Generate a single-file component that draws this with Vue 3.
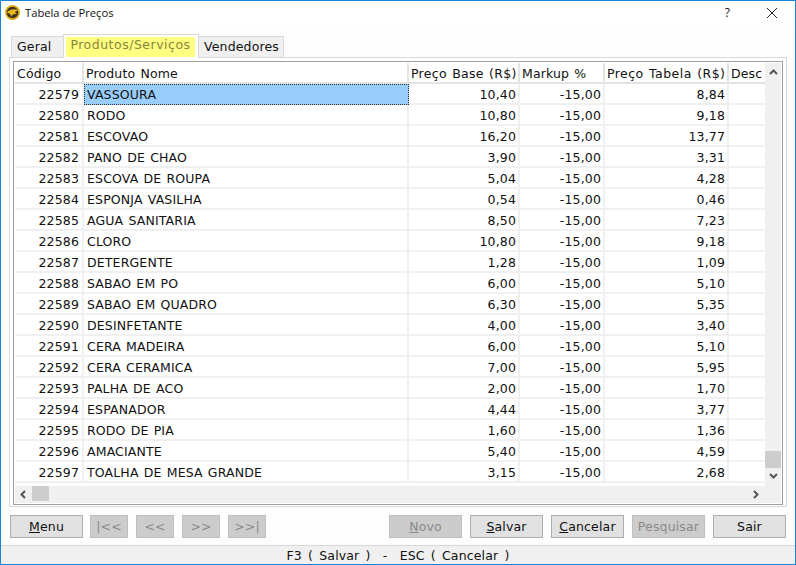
<script setup>
const rows = [
  [22579, 'VASSOURA', '10,40', '8,84'],
  [22580, 'RODO', '10,80', '9,18'],
  [22581, 'ESCOVAO', '16,20', '13,77'],
  [22582, 'PANO DE CHAO', '3,90', '3,31'],
  [22583, 'ESCOVA DE ROUPA', '5,04', '4,28'],
  [22584, 'ESPONJA VASILHA', '0,54', '0,46'],
  [22585, 'AGUA SANITARIA', '8,50', '7,23'],
  [22586, 'CLORO', '10,80', '9,18'],
  [22587, 'DETERGENTE', '1,28', '1,09'],
  [22588, 'SABAO EM PO', '6,00', '5,10'],
  [22589, 'SABAO EM QUADRO', '6,30', '5,35'],
  [22590, 'DESINFETANTE', '4,00', '3,40'],
  [22591, 'CERA MADEIRA', '6,00', '5,10'],
  [22592, 'CERA CERAMICA', '7,00', '5,95'],
  [22593, 'PALHA DE ACO', '2,00', '1,70'],
  [22594, 'ESPANADOR', '4,44', '3,77'],
  [22595, 'RODO DE PIA', '1,60', '1,36'],
  [22596, 'AMACIANTE', '5,40', '4,59'],
  [22597, 'TOALHA DE MESA GRANDE', '3,15', '2,68'],
]
</script>

<template>
  <div class="window">
    <div class="titlebar">
      <svg class="logo" width="15" height="15" viewBox="0 0 16 16">
        <circle cx="8" cy="8" r="8" fill="#e2ab18" />
        <circle cx="8" cy="8" r="6.2" fill="#3a3222" />
        <path d="M2 8.5 C4 5 9 3.5 14 5.5 L10.5 7.5 L13 10 C10 9 8 9.5 6.5 12.5 C6.5 10 5 8.5 2 8.5 Z" fill="#eab81e" />
      </svg>
      <span class="title">Tabela de Preços</span>
      <span class="help">?</span>
      <svg class="close" width="12" height="12" viewBox="0 0 12 12">
        <path d="M1 1 L11 11 M11 1 L1 11" stroke="#222" stroke-width="1" fill="none" />
      </svg>
    </div>

    <div class="tabs">
      <div class="tab">Geral</div>
      <div class="tab active"><span>Produtos/Serviços</span></div>
      <div class="tab">Vendedores</div>
    </div>

    <div class="panel">
      <div class="grid-box">
        <div class="grid-main">
          <div class="grid-cols">
            <div class="row head">
              <div class="cell">Código</div>
              <div class="cell">Produto Nome</div>
              <div class="cell base">Preço Base (R$)</div>
              <div class="cell">Markup %</div>
              <div class="cell price">Preço Tabela (R$)</div>
              <div class="cell">Desc</div>
            </div>
            <div v-for="(r, i) in rows" :key="r[0]" class="row">
              <div class="cell num">{{ r[0] }}</div>
              <div class="cell" :class="{ selected: i === 0 }">{{ r[1] }}</div>
              <div class="cell num">{{ r[2] }}</div>
              <div class="cell num">-15,00</div>
              <div class="cell num">{{ r[3] }}</div>
              <div class="cell"></div>
            </div>
          </div>
          <div class="vscroll">
            <svg width="9" height="6" viewBox="0 0 9 6"><path d="M1 5 L4.5 1.5 L8 5" stroke="#555" stroke-width="2" fill="none" /></svg>
            <div class="vtrack"><div class="vthumb"></div></div>
            <svg width="9" height="6" viewBox="0 0 9 6"><path d="M1 1 L4.5 4.5 L8 1" stroke="#555" stroke-width="2" fill="none" /></svg>
          </div>
        </div>
        <div class="hscroll">
          <svg width="6" height="9" viewBox="0 0 6 9"><path d="M5 1 L1.5 4.5 L5 8" stroke="#555" stroke-width="2" fill="none" /></svg>
          <div class="hthumb"></div>
          <svg class="hright" width="6" height="9" viewBox="0 0 6 9"><path d="M1 1 L4.5 4.5 L1 8" stroke="#555" stroke-width="2" fill="none" /></svg>
        </div>
      </div>
    </div>

    <div class="buttons">
      <button class="btn wide"><u>M</u>enu</button>
      <button class="btn nav off">|&lt;&lt;</button>
      <button class="btn nav off">&lt;&lt;</button>
      <button class="btn nav off">&gt;&gt;</button>
      <button class="btn nav off">&gt;&gt;|</button>
      <div class="spacer"></div>
      <button class="btn wide off"><u>N</u>ovo</button>
      <button class="btn wide"><u>S</u>alvar</button>
      <button class="btn wide"><u>C</u>ancelar</button>
      <button class="btn wide off">Pesquisar</button>
      <button class="btn wide">Sair</button>
    </div>

    <div class="status">F3 ( Salvar )&nbsp; -&nbsp; ESC ( Cancelar )</div>
  </div>
</template>

<style scoped>
.window {
  box-sizing: border-box;
  width: 796px;
  height: 565px;
  border: 1px solid #1a84d6;
  background: #fdfdfd;
  display: flex;
  flex-direction: column;
  font-family: "DejaVu Sans", sans-serif;
  font-size: 12.5px;
  letter-spacing: 0.15px;
  word-spacing: 1px;
  color: #111;
  overflow: hidden;
}
.titlebar {
  height: 29px;
  flex-shrink: 0;
  display: flex;
  align-items: center;
  padding: 0 0 6px 4px;
  box-sizing: border-box;
  background: #fff;
}
.logo {
  margin-right: 5px;
}
.title {
  font-family: "Open Sans", sans-serif;
  font-size: 11.2px;
  letter-spacing: 0;
  word-spacing: 0;
  flex: 1;
}
.help {
  font-family: "Open Sans", sans-serif;
  font-size: 12px;
  margin-right: 36px;
}
.close {
  margin-right: 17px;
}
.tabs {
  height: 27px;
  flex-shrink: 0;
  padding-left: 10px;
  display: flex;
  align-items: flex-end;
}
.tab {
  box-sizing: border-box;
  height: 21px;
  padding: 0 5px;
  border: 1px solid #d9d9d9;
  border-bottom: none;
  background: #f0f0f0;
  line-height: 20px;
  margin-right: -1px;
}
.tab:first-child {
  width: 53px;
}
.tab:last-child {
  width: 86px;
}
.tab.active {
  width: 136px;
  height: 24px;
  padding: 2px 3px 0 2px;
  background: #fff;
  position: relative;
  margin-bottom: -1px;
  z-index: 1;
}
.tab.active span {
  display: block;
  height: 20px;
  background: #ffff80;
  color: #85853e;
  text-align: center;
  line-height: 16px;
  letter-spacing: 0.5px;
}
.panel {
  box-sizing: border-box;
  height: 450px;
  flex-shrink: 0;
  margin: 0 8px;
  padding: 3px 3px 1px 3px;
  border: 1px solid #d9d9d9;
  background: #fff;
}
.grid-box {
  box-sizing: border-box;
  height: 444px;
  border: 1px solid #a0a0a0;
  display: flex;
  flex-direction: column;
  padding: 1px;
  background: #fff;
}
.grid-main {
  flex: 1;
  display: flex;
  min-height: 0;
}
.grid-cols {
  width: 750px;
  overflow: hidden;
}
.row {
  display: grid;
  grid-template-columns: 69px 325px 111px 85px 124px 36px;
  height: 21px;
}
.cell {
  box-sizing: border-box;
  height: 21px;
  padding: 0 3px;
  line-height: 22px;
  border-right: 2px solid #f0f0f0;
  border-bottom: 2px solid #f0f0f0;
  white-space: nowrap;
  overflow: hidden;
}
.cell:last-child {
  border-right: none;
}
.head .cell {
  border-color: #e3e3e3;
  padding-left: 2px;
}
.head .base {
  letter-spacing: 0.3px;
}
.head .price {
  letter-spacing: 0.45px;
}
.num {
  text-align: right;
  padding-right: 2px;
}
.num:first-child {
  padding-right: 3px;
}
.selected {
  background: #99cdfc;
  outline: 1px dotted #333;
  outline-offset: -1px;
  border-color: transparent;
}
.vscroll {
  flex: 1;
  background: #f0f0f0;
  display: flex;
  flex-direction: column;
  align-items: center;
  padding: 6px 0 7px;
}
.vtrack {
  flex: 1;
  width: 100%;
  display: flex;
  flex-direction: column;
  justify-content: flex-end;
  padding-bottom: 5px;
}
.vthumb {
  height: 17px;
  background: #cdcdcd;
}
.hscroll {
  height: 17px;
  background: #f0f0f0;
  display: flex;
  align-items: center;
  padding-left: 5px;
}
.hthumb {
  width: 17px;
  height: 15px;
  margin-left: 6px;
  align-self: flex-start;
  background: #cdcdcd;
}
.hright {
  margin-left: auto;
  margin-right: 22px;
}
.buttons {
  display: flex;
  flex-shrink: 0;
  gap: 8px;
  padding: 8px 9px 0 9px;
  height: 38px;
  box-sizing: border-box;
}
.btn {
  box-sizing: border-box;
  height: 23px;
  padding: 0 0 1px;
  font: inherit;
  letter-spacing: inherit;
  color: #111;
  background: #e1e1e1;
  border: 1px solid #adadad;
}
.wide {
  width: 73px;
}
.nav {
  width: 38px;
}
.wide + .nav {
  margin-left: -1px;
}
.off {
  background: #cccccc;
  border-color: #bfbfbf;
  color: #8a8a8a;
}
.spacer {
  flex: 1;
}
.status {
  flex: 1 1 0;
  min-height: 0;
  overflow: hidden;
  background: #f0f0f0;
  border-top: 1px solid #d7d7d7;
  text-align: center;
  line-height: 20px;
  word-spacing: 2px;
}
</style>
